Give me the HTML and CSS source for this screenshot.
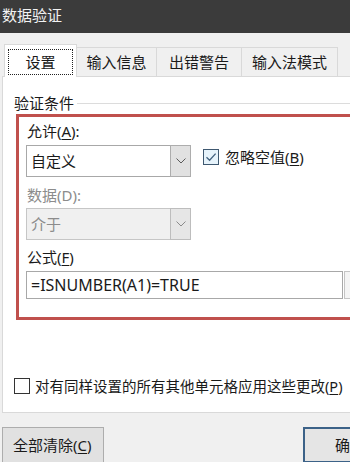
FILE: index.html
```html
<!DOCTYPE html>
<html lang="zh">
<head>
<meta charset="utf-8">
<title>数据验证</title>
<link rel="stylesheet" href="styles.css">
</head>
<body>
<div class="dialog">
  <div class="titlebar">数据验证</div>
  <div class="tabs">
    <div class="tab tab-active t1"><span class="focus">设置</span></div>
    <div class="tab t2">输入信息</div>
    <div class="tab t3">出错警告</div>
    <div class="tab t4">输入法模式</div>
  </div>
  <div class="panel">
    <div class="group-head">
      <span class="group-label">验证条件</span>
      <span class="group-line"></span>
    </div>
    <div class="redbox">
      <div class="label l-allow">允许(<u>A</u>):</div>
      <div class="row">
        <div class="combo">
          <div class="combo-text">自定义</div>
          <div class="combo-btn">
            <svg width="10" height="6" viewBox="0 0 10 6"><path d="M0.5 0.5 L5 5 L9.5 0.5" fill="none" stroke="#5a5a5a" stroke-width="1"/></svg>
          </div>
        </div>
        <div class="check-item">
          <span class="cbox checked">
            <svg width="14" height="14" viewBox="0 0 14 14"><path d="M2.5 7.2 L5.6 10.2 L11.6 3.6" fill="none" stroke="#43627f" stroke-width="1.3"/></svg>
          </span>
          <span class="check-text">忽略空值(<u>B</u>)</span>
        </div>
      </div>
      <div class="label disabled l-data">数据(D):</div>
      <div class="combo combo-disabled">
        <div class="combo-text">介于</div>
        <div class="combo-btn">
          <svg width="10" height="6" viewBox="0 0 10 6"><path d="M0.5 0.5 L5 5 L9.5 0.5" fill="none" stroke="#8a8a8a" stroke-width="1"/></svg>
        </div>
      </div>
      <div class="label l-formula">公式(<u>F</u>)</div>
      <div class="formula-row">
        <div class="formula">=ISNUMBER(A1)=TRUE</div>
        <div class="refbtn"></div>
      </div>
    </div>
    <div class="apply-row">
      <span class="cbox"></span>
      <span class="apply-text">对有同样设置的所有其他单元格应用这些更改(<u>P</u>)</span>
    </div>
  </div>
  <div class="buttons">
    <div class="btn btn-clear">全部清除(<u>C</u>)</div>
    <div class="btn btn-ok">确定</div>
  </div>
</div>
</body>
</html>
```

FILE: styles.css
```css
html, body {
  margin: 0;
  padding: 0;
}
body {
  width: 350px;
  height: 462px;
  overflow: hidden;
  background: #f0f0f0;
  font-family: "Noto Sans", "Noto Sans CJK SC", sans-serif;
  font-size: 15px;
  color: #1a1a1a;
}
u {
  text-decoration: underline;
  text-underline-offset: 2px;
  text-decoration-thickness: 1px;
}
.dialog {
  width: 350px;
  height: 462px;
  display: flex;
  flex-direction: column;
  overflow: hidden;
}
.titlebar {
  height: 33px;
  line-height: 31px;
  background: #3b3b3b;
  color: #f2f2f2;
  padding-left: 2px;
  font-size: 15px;
  flex: none;
}
.tabs {
  display: flex;
  align-items: flex-end;
  margin-top: 11px;
  padding-left: 4px;
  height: 32px;
  flex: none;
  position: relative;
  z-index: 1;
}
.tab {
  box-sizing: border-box;
  height: 29px;
  border: 1px solid #d9d9d9;
  border-bottom: none;
  border-left: none;
  background: #f0f0f0;
  display: flex;
  align-items: center;
  justify-content: center;
  line-height: 20px;
}
.tab-active {
  height: 33px;
  margin-bottom: -1px;
  background: #fff;
  border-left: 1px solid #d9d9d9;
}
.t1 { width: 73px; }
.t2 { width: 80px; }
.t3 { width: 85px; }
.t4 { width: 96px; }
.focus {
  box-sizing: border-box;
  width: 65px;
  height: 26px;
  border: 1px dotted #222;
  display: flex;
  align-items: center;
  justify-content: center;
  margin-top: 2px;
}
.panel {
  box-sizing: border-box;
  margin-left: 2px;
  width: 380px;
  height: 337px;
  background: #fff;
  border: 1px solid #d9d9d9;
  flex: none;
  display: flex;
  flex-direction: column;
}
.group-head {
  display: flex;
  align-items: center;
  height: 20px;
  margin-top: 16px;
  padding-left: 11px;
}
.group-label {
  line-height: 20px;
  padding-right: 3px;
}
.group-line {
  flex: 1;
  height: 1px;
  background: #dcdcdc;
  margin-top: 1px;
}
.redbox {
  box-sizing: border-box;
  margin-top: 1px;
  margin-left: 13px;
  width: 360px;
  border: 3px solid #c0504d;
  padding: 4px 0 18px 7px;
  display: flex;
  flex-direction: column;
}
.label {
  height: 20px;
  line-height: 20px;
  padding-left: 1px;
}
.disabled {
  color: #8c8c8c;
}
.l-data { margin-top: 8px; }
.l-formula { margin-top: 7px; }
.row {
  display: flex;
  align-items: center;
  margin-top: 4px;
}
.combo {
  box-sizing: border-box;
  width: 165px;
  height: 32px;
  display: flex;
  border: 1px solid #a8a8a8;
  background: #fff;
  flex: none;
}
.combo-disabled {
  margin-top: 3px;
  background: #f0f0f0;
  border-color: #c6c6c6;
  color: #8c8c8c;
}
.combo-text {
  flex: 1;
  line-height: 30px;
  padding-left: 4px;
}
.combo-btn {
  box-sizing: border-box;
  width: 21px;
  margin: -1px -1px -1px 0;
  background: #e1e1e1;
  border: 1px solid #adadad;
  display: flex;
  align-items: center;
  justify-content: center;
}
.combo-disabled .combo-btn {
  background: #e6e6e6;
  border-color: #bdbdbd;
}
.check-item {
  display: flex;
  align-items: center;
  margin-left: 12px;
  margin-top: -8px;
}
.cbox {
  box-sizing: border-box;
  width: 16px;
  height: 16px;
  border: 1px solid #333;
  background: #fff;
  display: flex;
  align-items: center;
  justify-content: center;
  flex: none;
}
.cbox.checked {
  background: #e6f3fb;
  border-color: #3e5870;
}
.check-text {
  margin-left: 6px;
  line-height: 20px;
}
.formula-row {
  display: flex;
  margin-top: 4px;
  height: 28px;
}
.formula {
  box-sizing: border-box;
  width: 317px;
  height: 28px;
  border: 1px solid #a8a8a8;
  background: #fff;
  line-height: 26px;
  padding-left: 4px;
  flex: none;
  font-size: 16px;
}
.refbtn {
  box-sizing: border-box;
  width: 20px;
  height: 28px;
  margin-left: 1px;
  border: 1px solid #c4c4c4;
  background: #f4f4f4;
  flex: none;
}
.apply-row {
  display: flex;
  align-items: center;
  margin-top: 56px;
  padding-left: 11px;
}
.apply-text {
  margin-left: 5px;
  line-height: 20px;
  font-size: 14.5px;
  white-space: nowrap;
}
.buttons {
  display: flex;
  justify-content: space-between;
  margin-top: 14px;
  padding-left: 2px;
  flex: none;
}
.btn {
  box-sizing: border-box;
  height: 36px;
  background: #e1e1e1;
  border: 1px solid #adadad;
  line-height: 34px;
  white-space: nowrap;
}
.btn-clear {
  width: 102px;
  padding-left: 10px;
}
.btn-ok {
  width: 80px;
  margin-right: -33px;
  border: 2px solid #3c6288;
  background: #e5e5e5;
  padding-left: 30px;
  line-height: 32px;
}
```
